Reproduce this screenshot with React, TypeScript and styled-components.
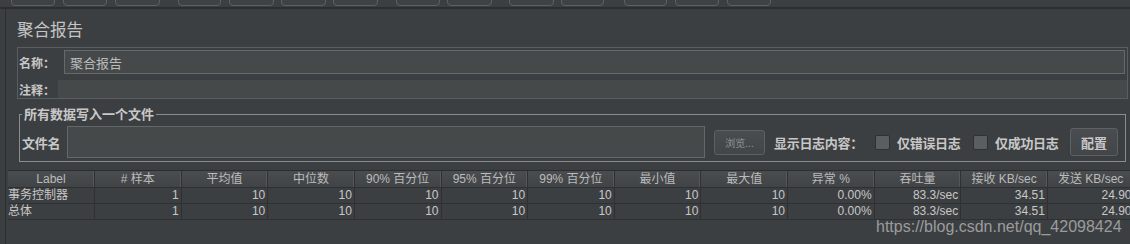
import styled, { createGlobalStyle } from "styled-components"

const GlobalStyle = createGlobalStyle`
  html, body {
    margin: 0;
    padding: 0;
    background: #3c3f41;
  }
  body {
    width: 1130px;
    height: 244px;
    overflow: hidden;
    font-family: "Noto Sans CJK SC", "Liberation Sans", sans-serif;
    color: #bbbbbb;
  }
`

const Toolbar = styled.div`
  height: 7px;
  display: flex;
  overflow: hidden;
`
const ToolButton = styled.div<{ $gap: number; $w: number }>`
  flex: none;
  width: ${(p) => p.$w}px;
  height: 20px;
  margin-top: -14px;
  margin-left: ${(p) => p.$gap}px;
  box-sizing: border-box;
  border: 1px solid #5d6062;
  border-radius: 4px;
  background: #3f4244;
`
const TopRule = styled.div`
  height: 2px;
  background: #2b2d2e;
`
const Main = styled.div`
  margin-left: 5px;
  border-left: 1px solid #2c2e30;
  height: 235px;
  position: relative;
`
const Content = styled.div`
  padding-left: 11px;
  padding-top: 10px;
`
const Title = styled.div`
  font-size: 16.5px;
  line-height: 20px;
  height: 20px;
  color: #c4c4c4;
`
const NamePanel = styled.div`
  margin-top: 8px;
  width: 1111px;
  box-sizing: border-box;
  border: 1px solid #5b5e60;
  display: flex;
  flex-direction: column;
`
const FieldRow = styled.div<{ $h: number; $top: number }>`
  display: flex;
  align-items: center;
  height: ${(p) => p.$h}px;
  margin-top: ${(p) => p.$top}px;
  padding-left: 1px;
`
const FieldLabel = styled.span<{ $w: number }>`
  flex: none;
  width: ${(p) => p.$w}px;
  font-size: 12px;
  font-weight: bold;
  color: #c8c8c8;
`
const TextInput = styled.div<{ $framed?: boolean }>`
  flex: 1;
  align-self: stretch;
  box-sizing: border-box;
  background: #45494a;
  border: ${(p) => (p.$framed ? "1px solid #66696b" : "none")};
  margin-right: ${(p) => (p.$framed ? 2 : 0)}px;
  padding-left: 5px;
  display: flex;
  align-items: center;
  font-size: 13px;
  color: #bbbbbb;
`
const FileGroup = styled.fieldset`
  margin: 7px 0 0 2px;
  width: 1107px;
  box-sizing: border-box;
  border: 1px solid #8a8d8f;
  padding: 4px 6px 3px 2px;
`
const Legend = styled.legend`
  padding: 0 2px;
  font-size: 13px;
  line-height: 16px;
  font-weight: bold;
  color: #c8c8c8;
`
const FileRow = styled.div`
  display: flex;
  align-items: center;
  height: 32px;
`
const BoldText = styled.span<{ $ml?: number; $w: number }>`
  flex: none;
  font-size: 13px;
  font-weight: bold;
  color: #c8c8c8;
  margin-left: ${(p) => p.$ml ?? 0}px;
  width: ${(p) => p.$w}px;
  white-space: nowrap;
  letter-spacing: -0.3px;
`
const FileInput = styled.div`
  flex: none;
  width: 638px;
  height: 32px;
  box-sizing: border-box;
  border: 1px solid #65686a;
  background: #45494a;
`
const Button = styled.div<{ $w: number; $h: number; $ml: number; $small?: boolean }>`
  flex: none;
  width: ${(p) => p.$w}px;
  height: ${(p) => p.$h}px;
  margin-left: ${(p) => p.$ml}px;
  box-sizing: border-box;
  border: 1px solid #5e6163;
  border-radius: 3px;
  background: linear-gradient(#4a4d4f, #434648);
  display: flex;
  align-items: center;
  justify-content: center;
  font-size: ${(p) => (p.$small ? 10 : 13)}px;
  font-weight: ${(p) => (p.$small ? "normal" : "bold")};
  color: ${(p) => (p.$small ? "#8f9294" : "#c8c8c8")};
`
const Check = styled.span<{ $ml: number }>`
  flex: none;
  width: 15px;
  height: 15px;
  margin-left: ${(p) => p.$ml}px;
  box-sizing: border-box;
  border: 1px solid #2f3133;
  border-radius: 2px;
  background: #5b5e60;
`
const Table = styled.div`
  margin-top: 8px;
  margin-left: 2px;
  border-top: 1px solid #2b2d2e;
  display: grid;
  grid-template-columns: 87px repeat(12, 86.64px);
`
const HeadCell = styled.div`
  height: 17px;
  box-sizing: border-box;
  background: linear-gradient(#4a4d4f, #414446);
  border-right: 1px solid #2e3032;
  border-bottom: 1px solid #2e3032;
  box-shadow: inset -1px 0 #55585a;
  font-family: "Liberation Sans", "Noto Sans CJK SC", sans-serif;
  font-size: 12px;
  line-height: 16px;
  text-align: center;
  white-space: nowrap;
  overflow: hidden;
  color: #bbbbbb;
`
const Cell = styled.div<{ $left?: boolean }>`
  height: 16px;
  box-sizing: border-box;
  border-right: 1px solid #2e3032;
  border-bottom: 1px solid #2e3032;
  padding: 0 2px 0 0;
  font-family: "Liberation Sans", "Noto Sans CJK SC", sans-serif;
  font-size: 12px;
  line-height: 15px;
  text-align: ${(p) => (p.$left ? "left" : "right")};
  white-space: nowrap;
  overflow: hidden;
  color: #c8c8c8;
`
const Watermark = styled.div`
  position: absolute;
  left: 870px;
  top: 209px;
  font-family: "Liberation Sans", sans-serif;
  font-size: 16px;
  line-height: 18px;
  color: #9a9c9e;
  white-space: nowrap;
`

const toolButtons = [
  [11, 44], [8, 44], [8, 45], [18, 43], [8, 45], [7, 45], [7, 45],
  [18, 44], [7, 45], [17, 45], [7, 43], [20, 43], [8, 44], [8, 44],
]

const headers = [
  "Label", "# 样本", "平均值", "中位数", "90% 百分位", "95% 百分位", "99% 百分位",
  "最小值", "最大值", "异常 %", "吞吐量", "接收 KB/sec", "发送 KB/sec",
]

const rows = [
  ["事务控制器", "1", "10", "10", "10", "10", "10", "10", "10", "0.00%", "83.3/sec", "34.51", "24.90"],
  ["总体", "1", "10", "10", "10", "10", "10", "10", "10", "0.00%", "83.3/sec", "34.51", "24.90"],
]

export default function App() {
  return (
    <>
      <GlobalStyle />
      <Toolbar>
        {toolButtons.map(([gap, w], i) => (
          <ToolButton key={i} $gap={gap} $w={w} />
        ))}
      </Toolbar>
      <TopRule />
      <Main>
        <Content>
          <Title>聚合报告</Title>
          <NamePanel>
            <FieldRow $h={24} $top={2}>
              <FieldLabel $w={45}>名称：</FieldLabel>
              <TextInput $framed>聚合报告</TextInput>
            </FieldRow>
            <FieldRow $h={18} $top={6}>
              <FieldLabel $w={39}>注释：</FieldLabel>
              <TextInput />
            </FieldRow>
          </NamePanel>
          <FileGroup>
            <Legend>所有数据写入一个文件</Legend>
            <FileRow>
              <BoldText $w={45}>文件名</BoldText>
              <FileInput />
              <Button $w={51} $h={25} $ml={9} $small>浏览...</Button>
              <BoldText $ml={9} $w={88}>显示日志内容：</BoldText>
              <Check $ml={13} />
              <BoldText $ml={7} $w={63}>仅错误日志</BoldText>
              <Check $ml={13} />
              <BoldText $ml={7} $w={63}>仅成功日志</BoldText>
              <Button $w={48} $h={28} $ml={12}>配置</Button>
            </FileRow>
          </FileGroup>
        </Content>
        <Table>
          {headers.map((h) => (
            <HeadCell key={h}>{h}</HeadCell>
          ))}
          {rows.map((r) =>
            r.map((v, i) => (
              <Cell key={r[0] + i} $left={i === 0}>
                {v}
              </Cell>
            ))
          )}
        </Table>
        <Watermark>https://blog.csdn.net/qq_42098424</Watermark>
      </Main>
    </>
  )
}
